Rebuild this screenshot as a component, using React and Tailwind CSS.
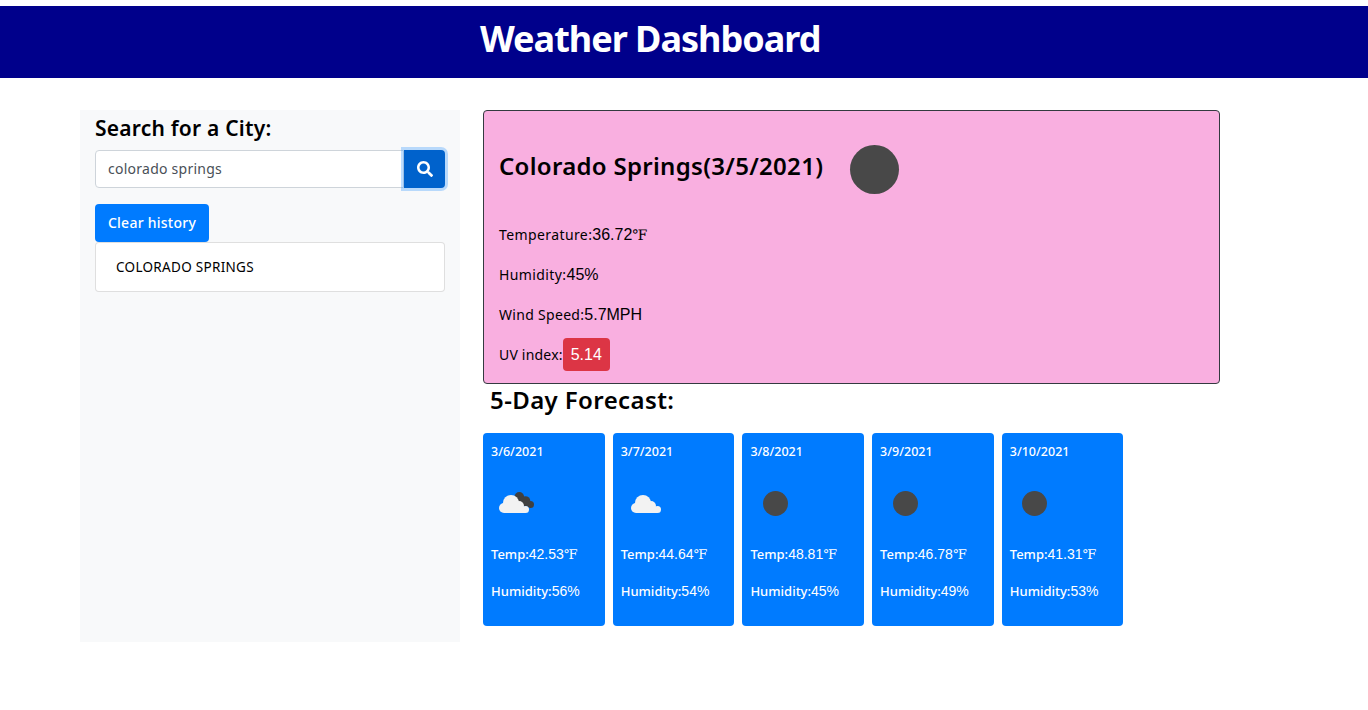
const SANS = "font-['Noto_Sans',sans-serif]";
const ARIAL = "font-['Liberation_Sans','DejaVu_Serif',serif]";

const days = [
  { d: "3/6/2021", t: "42.53", h: "56", icon: "cloudy" },
  { d: "3/7/2021", t: "44.64", h: "54", icon: "cloud" },
  { d: "3/8/2021", t: "48.81", h: "45", icon: "dot" },
  { d: "3/9/2021", t: "46.78", h: "49", icon: "dot" },
  { d: "3/10/2021", t: "41.31", h: "53", icon: "dot" },
];

function Cloud({ dark }) {
  return (
    <svg width="40" height="26" viewBox="0 0 40 26">
      {dark && (
        <g fill="#404040">
          <circle cx="20.300" cy="6.800" r="4.800" />
          <circle cx="26.500" cy="11" r="4.800" />
          <circle cx="31.500" cy="14.500" r="3.500" />
          <rect x="20" y="7" width="9" height="9" />
        </g>
      )}
      <g fill="#f2f2f2">
        <circle cx="5" cy="18" r="5" />
        <circle cx="12" cy="13" r="8" />
        <circle cx="20" cy="16" r="5" />
        <circle cx="26.500" cy="19.500" r="3.500" />
        <rect x="5" y="17" width="21.500" height="6" />
      </g>
    </svg>
  );
}

function Card({ d, t, h, icon }) {
  return (
    <div className="w-[121.600px] h-[193px] bg-[#007bff] rounded-[4px] text-white px-2 pt-[10px] font-medium text-[13px]">
      <div className="h-[18px] leading-[18px] text-[12.500px]">{d}</div>
      <div className="h-[50px] mt-[17px] flex items-center">
        {icon === "dot" ? (
          <div className="w-[25px] h-[25px] rounded-full bg-[#484848] ml-[12.500px]" />
        ) : (
          <div className={icon === "cloud" ? "ml-[10px] -mt-[1px]" : "ml-[8px] -mt-[1px]"}>
            <Cloud dark={icon === "cloudy"} />
          </div>
        )}
      </div>
      <div className="mt-[16px] h-[20px] leading-[20px]">
        Temp:<span className={`${ARIAL} text-[14px] font-normal`}>{t}<span className="text-[13px]">℉</span></span>
      </div>
      <div className="mt-[17px] h-[20px] leading-[20px]">
        Humidity:<span className={`${ARIAL} text-[14px] font-normal`}>{h}%</span>
      </div>
    </div>
  );
}

export default function App() {
  return (
    <div className={`${SANS} min-h-[710px] bg-white pt-[6px] text-black`}>
      <header className="h-[72px] bg-[#00008b] text-white pl-[480px] flex items-center">
        <h1 className="text-[36px] font-bold leading-none -mt-[6px] tracking-[-1px]">Weather Dashboard</h1>
      </header>
      <div className="flex mt-[32px] ml-[80px]">
        <aside className="w-[380px] h-[532px] bg-[#f8f9fa] px-[15px]">
          <h2 className="text-[21px] font-semibold leading-[36px] tracking-[0.22px]">Search for a City:</h2>
          <div className="flex mt-[4px] h-[38px]">
            <div className="flex-1 border border-[#ced4da] rounded-l-[4px] bg-white pl-3 pb-[2px] flex items-center text-[14px] text-[#495057] tracking-[0.25px]">
              colorado springs
            </div>
            <button className="w-[41px] bg-[#0062cc] rounded-r-[4px] shadow-[0_0_0_3px_rgba(38,143,255,0.3)] flex items-center justify-center">
              <svg width="16" height="16" viewBox="0 0 512 512" fill="#fff">
                <path d="M505 442.700L405.300 343c-4.500-4.500-10.600-7-17-7H372c27.600-35.300 44-79.700 44-128C416 93.100 322.900 0 208 0S0 93.100 0 208s93.100 208 208 208c48.300 0 92.700-16.400 128-44v16.300c0 6.400 2.500 12.500 7 17l99.700 99.700c9.400 9.400 24.600 9.400 33.900 0l28.300-28.300c9.400-9.400 9.400-24.600.1-34zM208 336c-70.700 0-128-57.200-128-128 0-70.700 57.200-128 128-128 70.700 0 128 57.200 128 128 0 70.700-57.200 128-128 128z" />
              </svg>
            </button>
          </div>
          <button className="block mt-[16px] h-[38px] w-[114px] pb-[2px] bg-[#007bff] text-white text-[14px] font-medium rounded-[4px] tracking-[0.25px]">
            Clear history
          </button>
          <div className="h-[50px] border border-[rgba(0,0,0,0.125)] rounded-[4px] bg-white pl-[20px] flex items-center text-[13.500px] tracking-[0.3px]">
            COLORADO SPRINGS
          </div>
        </aside>
        <main className="ml-[23px] w-[737px]">
          <section className="h-[274px] bg-[#f9afe0] border border-[#343a40] rounded-[4px] px-[15px]">
            <div className="flex items-center h-[48px] mt-[34px]">
              <h2 className="text-[24px] font-semibold leading-none tracking-[0.3px] -mt-[7px]">Colorado Springs(3/5/2021)</h2>
              <div className="w-[49px] h-[49px] rounded-full bg-[#484848] ml-[27px] mt-[1px]" />
            </div>
            <div className="mt-[21px] text-[14px] tracking-[0.4px]">
              <div className="h-[40px] flex items-center">Temperature:<span className={`${ARIAL} text-[16px] pt-[2px] tracking-normal`}>36.72<span className="text-[14.500px]">℉</span></span></div>
              <div className="h-[40px] flex items-center">Humidity:<span className={`${ARIAL} text-[16px] pt-[2px] tracking-normal`}>45%</span></div>
              <div className="h-[40px] flex items-center tracking-[0.3px]">Wind Speed:<span className={`${ARIAL} text-[16px] pt-[2px] tracking-normal`}>5.7MPH</span></div>
              <div className="h-[40px] flex items-center tracking-[0.2px]">
                UV index:
                <span className={`${ARIAL} text-[16px] pt-[1px] tracking-normal bg-[#dc3545] text-white rounded-[4px] w-[47px] h-[33px] flex items-center justify-center`}>5.14</span>
              </div>
            </div>
          </section>
          <h2 className="text-[24px] font-semibold leading-[36px] ml-[7px] tracking-[0.4px] -mt-[2px]">5-Day Forecast:</h2>
          <div className="flex gap-[8.100px] mt-[15px]">
            {days.map((x) => (
              <Card key={x.d} {...x} />
            ))}
          </div>
        </main>
      </div>
    </div>
  );
}
